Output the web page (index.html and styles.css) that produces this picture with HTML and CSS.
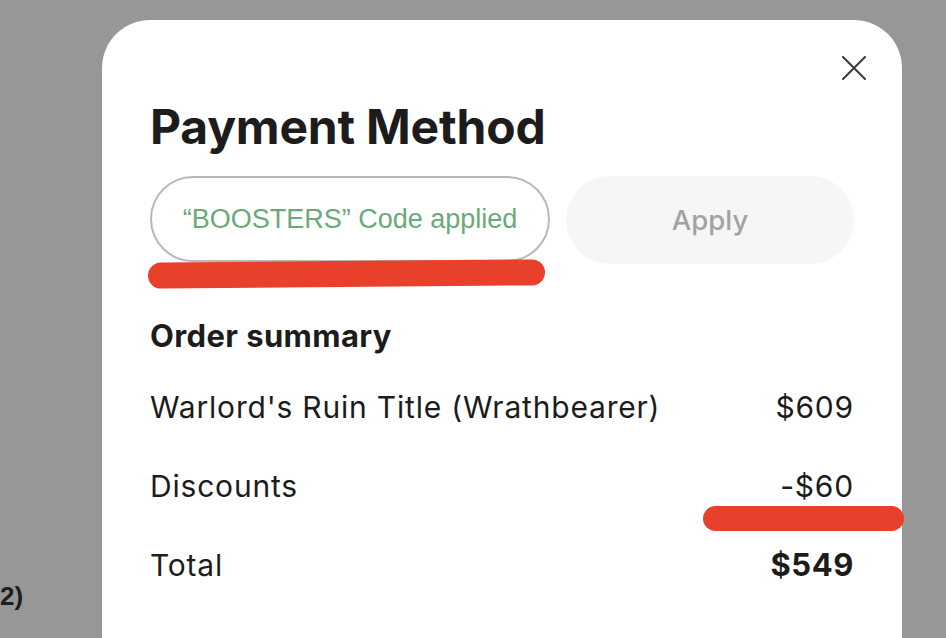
FILE: index.html
```html
<!DOCTYPE html>
<html>
<head>
<meta charset="utf-8">
<link rel="stylesheet" href="styles.css">
</head>
<body>
<div class="page">
  <div class="bg-text">2)</div>
  <div class="modal">
    <button class="close" aria-label="Close">
      <svg width="24" height="24" viewBox="0 0 24 24"><path d="M1 1 L23 23 M23 1 L1 23" stroke="#3a3a3a" stroke-width="2" fill="none" stroke-linecap="round"/></svg>
    </button>
    <h1 class="title">Payment Method</h1>
    <div class="code-row">
      <div class="code-input">“BOOSTERS” Code applied</div>
      <button class="apply">Apply</button>
    </div>
    <h2 class="summary-title">Order summary</h2>
    <div class="rows">
      <div class="row"><span>Warlord's Ruin Title (Wrathbearer)</span><span>$609</span></div>
      <div class="row"><span>Discounts</span><span>-$60</span></div>
      <div class="row total"><span>Total</span><span class="bold">$549</span></div>
    </div>
  </div>
  <div class="mark mark1"></div>
  <div class="mark mark2"></div>
</div>
</body>
</html>
```
FILE: styles.css
```css
html, body {
  margin: 0;
  padding: 0;
  background: #979797;
  overflow: hidden;
}
.page {
  position: relative;
  width: 946px;
  height: 638px;
  overflow: hidden;
  font-family: Inter, "Liberation Sans", sans-serif;
  color: #1c1c1c;
}
.bg-text {
  position: absolute;
  left: 0;
  top: 581px;
  font-family: "Liberation Sans", Arial, sans-serif;
  font-weight: 700;
  font-size: 26px;
  line-height: 30px;
  color: #1e1e1e;
}
.modal {
  position: relative;
  margin-left: 102px;
  margin-top: 20px;
  width: 800px;
  height: 700px;
  box-sizing: border-box;
  padding: 79px 48px 0 48px;
  background: #fff;
  border-radius: 48px;
}
.close {
  position: absolute;
  right: 36px;
  top: 36px;
  border: 0;
  background: none;
  padding: 0;
  width: 24px;
  height: 24px;
}
.close svg {
  display: block;
}
.title {
  margin: 0;
  font-size: 48px;
  font-weight: 700;
  line-height: 56px;
  letter-spacing: -0.2px;
}
.code-row {
  display: flex;
  gap: 16px;
  margin-top: 21px;
}
.code-input {
  width: 400px;
  height: 86px;
  box-sizing: border-box;
  border: 2px solid #b9b9b9;
  border-radius: 44px;
  display: flex;
  align-items: center;
  justify-content: center;
  font-family: "Liberation Sans", Arial, sans-serif;
  font-size: 27px;
  color: #6aa978;
}
.apply {
  flex: 1;
  height: 88px;
  border: 0;
  border-radius: 44px;
  background: #f6f6f6;
  font-family: Inter, "Liberation Sans", sans-serif;
  font-size: 27.5px;
  font-weight: 500;
  color: #a2a2a2;
}
.summary-title {
  margin: 52px 0 0 0;
  font-size: 31px;
  font-weight: 700;
  line-height: 40px;
  letter-spacing: 0.4px;
}
.rows {
  margin-top: 31px;
  display: flex;
  flex-direction: column;
  gap: 39px;
}
.row {
  display: flex;
  justify-content: space-between;
  font-size: 30px;
  line-height: 40px;
  letter-spacing: 0.8px;
}
.bold {
  font-weight: 700;
  font-size: 31px;
  letter-spacing: 0.6px;
}
.mark {
  position: absolute;
  background: #e8402a;
  border-radius: 13px;
}
.mark1 {
  left: 148px;
  top: 261px;
  width: 397px;
  height: 26px;
  transform: rotate(-0.5deg);
}
.mark2 {
  left: 703px;
  top: 506px;
  width: 201px;
  height: 25px;
}
```
